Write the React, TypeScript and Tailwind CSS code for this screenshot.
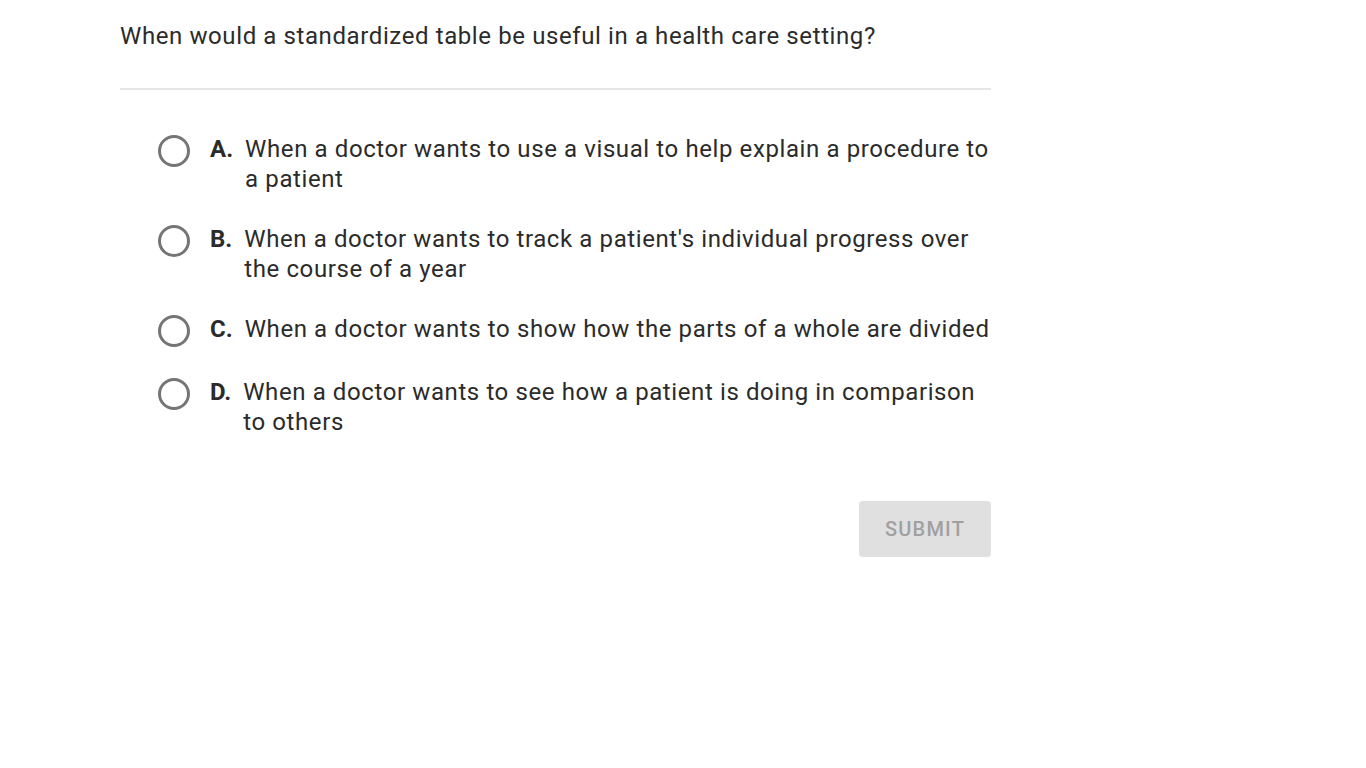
export default function App() {
  const options = [
    { l: "A.", t: "When a doctor wants to use a visual to help explain a procedure to a patient" },
    { l: "B.", t: "When a doctor wants to track a patient's individual progress over the course of a year" },
    { l: "C.", t: "When a doctor wants to show how the parts of a whole are divided" },
    { l: "D.", t: "When a doctor wants to see how a patient is doing in comparison to others" },
  ];
  return (
    <div className="min-h-screen bg-white text-[#2b2b2b]" style={{ fontFamily: "Roboto, 'Liberation Sans', sans-serif" }}>
      <div className="ml-[120px] w-[871px] pt-[18px]">
        <div className="text-[24px] leading-[36px] tracking-[0.6px]">When would a standardized table be useful in a health care setting?</div>
        <div className="mt-[34px] h-[2px] bg-[#e6e6e6]" />
        <div className="mt-[44px] ml-[38px] flex flex-col gap-[30px]">
          {options.map((o) => (
            <div key={o.l} className="flex items-start">
              <div className="mt-[1px] w-[32px] h-[32px] rounded-full border-[3px] border-[#757575] shrink-0" />
              <div className="ml-[20px] flex text-[24px] leading-[30px] tracking-[0.6px]">
                <span className="font-bold mr-[12px] shrink-0 tracking-normal">{o.l}</span>
                <span>{o.t}</span>
              </div>
            </div>
          ))}
        </div>
        <div className="mt-[64px] flex justify-end">
          <button className="w-[132px] h-[56px] rounded-[4px] bg-[#e0e0e0] text-[#a0a0a0] text-[20px] font-medium tracking-[1.2px]">SUBMIT</button>
        </div>
      </div>
    </div>
  );
}
